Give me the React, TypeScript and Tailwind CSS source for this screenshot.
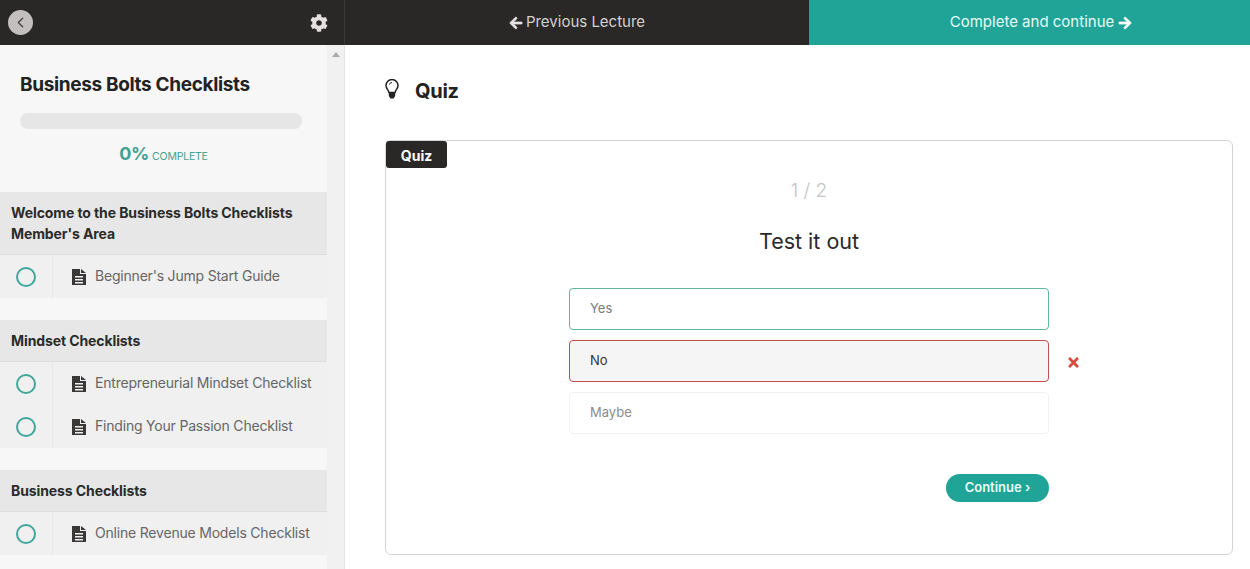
import { ChevronLeft } from "lucide-react";
import { FaArrowLeft, FaArrowRight, FaCog, FaTimes } from "react-icons/fa";

interface Section {
  title: string[];
  lectures: string[];
}

const sections: Section[] = [
  {
    title: ["Welcome to the Business Bolts Checklists", "Member's Area"],
    lectures: ["Beginner's Jump Start Guide"],
  },
  { title: ["Mindset Checklists"], lectures: ["Entrepreneurial Mindset Checklist", "Finding Your Passion Checklist"] },
  { title: ["Business Checklists"], lectures: ["Online Revenue Models Checklist"] },
];

function TopBar() {
  return (
    <header className="flex h-[45px] shrink-0 text-[15px]">
      <div className="flex w-[345px] items-center justify-between border-r border-[#3d3a3a] bg-[#2a2727] pr-[16px] pl-[8px]">
        <span className="flex h-[25px] w-[25px] items-center justify-center rounded-full bg-[#c4bfbf] text-[#4a4646]">
          <ChevronLeft size={17} strokeWidth={2} />
        </span>
        <FaCog size={18} className="text-[#e4e0e0]" />
      </div>
      <a className="flex flex-1 items-center justify-center gap-[3px] bg-[#2a2727] text-[#d4d0d0]">
        <FaArrowLeft size={14} stroke="currentColor" strokeWidth={24} className="text-[#e8e4e4]" />
        Previous Lecture
      </a>
      <a className="flex w-[441px] items-center justify-center gap-[4px] bg-[#1fa497] pl-[23px] text-[#e6fbf8]">
        Complete and continue
        <FaArrowRight size={14} stroke="currentColor" strokeWidth={24} className="text-white" />
      </a>
    </header>
  );
}

function FileIcon() {
  return (
    <svg viewBox="0 0 14 16" className="h-[16px] w-[14px] shrink-0 text-[#3a3737]" fill="currentColor">
      <path
        fillRule="evenodd"
        d="M0 0h8v5h6v11H0V0zm9 0l5 4H9V0zM3 7v1.5h8V7H3zm0 3v1.5h8V10H3zm0 3v1.5h8V13H3z"
      />
    </svg>
  );
}

function BulbIcon() {
  return (
    <svg viewBox="0 0 14 20" className="mb-[4px] h-[20px] w-[14px] text-[#222]" fill="none" stroke="currentColor">
      <path strokeWidth="1.5" d="M4 13.5C3.5 11 1 9.5 1 6.5a6 6 0 0 1 12 0c0 3-2.5 4.500-3 7z" />
      <path strokeWidth="1" d="M4.500 5.500a2.500 2.500 0 0 1 2.500-2" />
      <path fill="currentColor" stroke="none" d="M3.800 14h6.400v3l-1.700 2.500h-3L3.800 17z" />
    </svg>
  );
}

function Sidebar() {
  return (
    <aside className="flex h-[524px] w-[345px] shrink-0 overflow-hidden border-r border-[#e4e4e4] bg-[#f7f7f7]">
      <div className="w-[327px] shrink-0">
        <div className="h-[147px] px-[20px] pt-[28px]">
          <h1 className="text-[19px] leading-[24px] font-bold tracking-[-0.35px] text-[#222]">Business Bolts Checklists</h1>
          <div className="mt-[16px] h-[16px] w-[282px] rounded-full bg-[#e6e6e6]" />
          <p className="mt-[13px] flex items-baseline justify-center gap-[3px] text-[#3fa294]">
            <span className="text-[18px] leading-[24px] font-bold tracking-[-0.3px]">0%</span>
            <span className="text-[10.500px] tracking-[-0.2px]">COMPLETE</span>
          </p>
        </div>
        {sections.map((section) => (
          <section key={section.title[0]} className="mb-[22px]">
            <h2 className="border-b border-[#dedede] bg-[#e7e7e7] px-[11px] py-[10px] text-[14px] leading-[21px] font-bold tracking-[-0.1px] text-[#2b2b2b]">
              {section.title.map((line) => (
                <div key={line}>{line}</div>
              ))}
            </h2>
            {section.lectures.map((lecture) => (
              <div key={lecture} className="flex h-[43px] items-center bg-[#f0f0f0]">
                <div className="flex h-full w-[53px] shrink-0 items-center justify-center border-r border-[#e8e8e8]">
                  <span className="h-[20px] w-[20px] rounded-full border-2 border-[#3fa79a]" />
                </div>
                <span className="ml-[19px]">
                  <FileIcon />
                </span>
                <span className="ml-[9px] pb-[2px] text-[14px] tracking-[-0.2px] whitespace-nowrap text-[#666]">
                  {lecture}
                </span>
              </div>
            ))}
          </section>
        ))}
      </div>
      <div className="flex flex-1 justify-center bg-[#f1f1f1] pt-[7px]">
        <span className="h-0 w-0 border-x-[4px] border-b-[5px] border-x-transparent border-b-[#a8a8a8]" />
      </div>
    </aside>
  );
}

function Option({ label, className }: { label: string; className: string }) {
  return (
    <div className={`flex h-[42px] items-center rounded-[4px] border px-[20px] text-[13px] ${className}`}>{label}</div>
  );
}

function Quiz() {
  return (
    <main className="flex-1 pr-[17px] pl-[40px]">
      <div className="flex h-[95px] items-center pb-[4px]">
        <BulbIcon />
        <h2 className="ml-[16px] text-[20px] font-bold tracking-[-0.3px] text-[#222]">Quiz</h2>
      </div>
      <div className="relative h-[415px] rounded-[6px] border border-[#d4d4d4]">
        <span className="absolute top-0 left-0 flex h-[27px] w-[61px] items-center justify-center rounded-[3px] bg-[#2a2727] pt-[1px] text-[14px] font-bold text-white">
          Quiz
        </span>
        <div className="flex flex-col items-center pt-[36px]">
          <p className="text-[19px] leading-[28px] font-light text-[#c4c4c4]">1 / 2</p>
          <p className="mt-[21px] text-[21.500px] leading-[30px] text-[#2a2a2a]">Test it out</p>
          <div className="mt-[32px] flex w-[480px] flex-col gap-[10px]">
            <Option label="Yes" className="border-[#5fb89a] text-[#7d7d7d]" />
            <div className="relative">
              <Option label="No" className="border-[#c0504d] bg-[#f6f5f5] text-[#333]" />
              <FaTimes size={15} className="absolute top-[15px] -right-[32px] text-[#dc4b3e]" />
            </div>
            <Option label="Maybe" className="border-[#f2f2f2] text-[#8c8c8c]" />
          </div>
          <div className="mt-[40px] flex w-[480px] justify-end">
            <button className="h-[28px] w-[103px] rounded-full bg-[#1fa497] pb-[1px] text-[13px] font-semibold text-[#eafcf9]">
              Continue ›
            </button>
          </div>
        </div>
      </div>
    </main>
  );
}

export default function App() {
  return (
    <div className="flex h-[569px] w-[1250px] flex-col overflow-hidden bg-white font-['Inter','Open_Sans',sans-serif]">
      <TopBar />
      <div className="flex flex-1">
        <Sidebar />
        <Quiz />
      </div>
    </div>
  );
}
